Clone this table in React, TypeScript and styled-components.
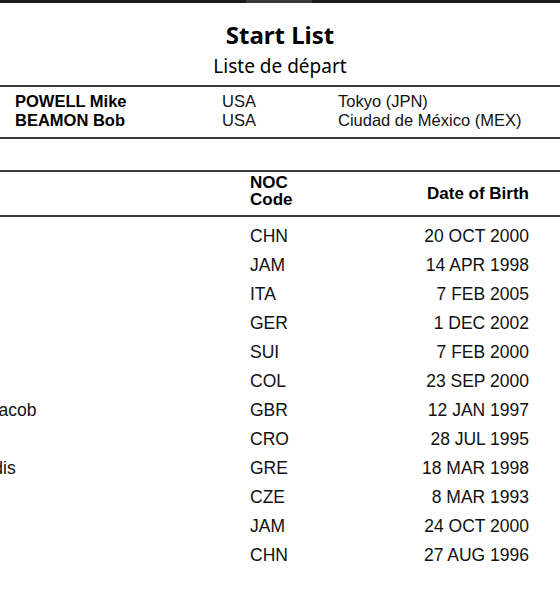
import React from 'react';
import styled, { createGlobalStyle } from 'styled-components';

const GlobalStyle = createGlobalStyle`
  html, body {
    margin: 0;
    padding: 0;
    background: #ffffff;
  }
  body {
    font-family: "Liberation Sans", Arial, sans-serif;
    color: #111111;
  }
`;

const records = [
  { name: 'POWELL Mike', noc: 'USA', place: 'Tokyo (JPN)' },
  { name: 'BEAMON Bob', noc: 'USA', place: 'Ciudad de México (MEX)' },
];

const athletes = [
  { name: 'SHI Yuhao', noc: 'CHN', dob: '20 OCT 2000' },
  { name: 'McLEOD Carey', noc: 'JAM', dob: '14 APR 1998' },
  { name: 'FURLANI Mattia', noc: 'ITA', dob: '7 FEB 2005' },
  { name: 'BATZ Simon', noc: 'GER', dob: '1 DEC 2002' },
  { name: 'EHAMMER Simon', noc: 'SUI', dob: '7 FEB 2000' },
  { name: 'DALMERO Arnovis', noc: 'COL', dob: '23 SEP 2000' },
  { name: 'FINCHAM-DUKES Jacob', noc: 'GBR', dob: '12 JAN 1997' },
  { name: 'ČEKO Marko', noc: 'CRO', dob: '28 JUL 1995' },
  { name: 'TENTOGLOU Miltiadis', noc: 'GRE', dob: '18 MAR 1998' },
  { name: 'JUŠKA Radek', noc: 'CZE', dob: '8 MAR 1993' },
  { name: 'PINNOCK Wayne', noc: 'JAM', dob: '24 OCT 2000' },
  { name: 'ZHANG Mingkun', noc: 'CHN', dob: '27 AUG 1996' },
];

const App = () => {
  return (
    <Page>
      <GlobalStyle />
      <TopBar />
      <TitleBlock>
        <h1>Start List</h1>
        <h2>Liste de départ</h2>
      </TitleBlock>
      <Rule />
      <RecordTable>
        {records.map((r) => (
          <RecordRow key={r.name}>
            <b>{r.name}</b>
            <span>{r.noc}</span>
            <span>{r.place}</span>
          </RecordRow>
        ))}
      </RecordTable>
      <Rule />
      <Spacer />
      <Rule />
      <StartTable>
        <HeadRow>
          <div />
          <div className="noc">
            <div>NOC</div>
            <div>Code</div>
          </div>
          <div className="dob">Date of Birth</div>
        </HeadRow>
        <Rule />
        <Body>
          {athletes.map((a) => (
            <AthleteRow key={a.name}>
              <span className="name">{a.name}</span>
              <span>{a.noc}</span>
              <span className="dob">{a.dob}</span>
            </AthleteRow>
          ))}
        </Body>
      </StartTable>
    </Page>
  );
};

const Page = styled.div`
  width: 560px;
  height: 600px;
  overflow: hidden;
  background: #ffffff;
`;

const TopBar = styled.div`
  height: 3px;
  background: linear-gradient(
    to right,
    #1c1c1c 0,
    #1c1c1c 246px,
    #3a3a3a 246px,
    #3a3a3a 312px,
    #1c1c1c 312px
  );
`;

const TitleBlock = styled.div`
  text-align: center;
  padding: 15px 0 4px;
  font-family: "Noto Sans", "Open Sans", sans-serif;
  color: #000000;
  h1 {
    margin: 0;
    font-size: 24px;
    line-height: 33px;
    font-weight: 700;
  }
  h2 {
    margin: 0;
    font-size: 19px;
    line-height: 30px;
    font-weight: 400;
  }
`;

const Rule = styled.div`
  height: 2px;
  background: #3c3c3c;
`;

const RecordTable = styled.div`
  padding: 5px 0 7px;
`;

const RecordRow = styled.div`
  display: grid;
  grid-template-columns: 207px 116px 1fr;
  padding-left: 15px;
  height: 19px;
  align-items: center;
  font-size: 16.5px;
  white-space: nowrap;
  b {
    font-weight: 700;
    color: #000000;
  }
`;

const Spacer = styled.div`
  height: 31px;
`;

const StartTable = styled.div`
  margin-left: -161px;
  width: 721px;
`;

const HeadRow = styled.div`
  display: grid;
  grid-template-columns: 411px 120px 159px;
  height: 43px;
  align-items: center;
  font-size: 17px;
  font-weight: 700;
  line-height: 17px;
  color: #000000;
  .noc {
    display: flex;
    flex-direction: column;
    padding-bottom: 6px;
  }
  .dob {
    text-align: right;
  }
`;

const Body = styled.div`
  padding-top: 5px;
`;

const AthleteRow = styled.div`
  display: grid;
  grid-template-columns: 411px 120px 159px;
  height: 29px;
  align-items: center;
  font-size: 17.5px;
  white-space: nowrap;
  .name {
    overflow: hidden;
  }
  .dob {
    text-align: right;
  }
`;

export default App;
